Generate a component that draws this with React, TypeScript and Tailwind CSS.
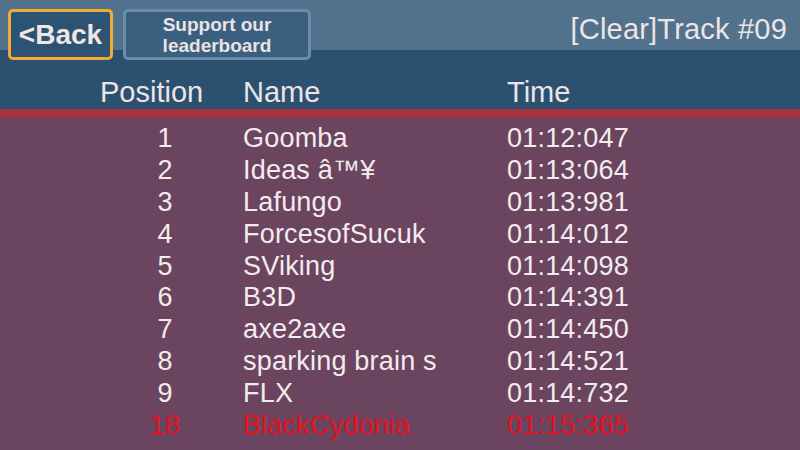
import React from "react";

type Entry = {
  pos: number;
  name: string;
  time: string;
  me?: boolean;
};

const entries: Entry[] = [
  { pos: 1, name: "Goomba", time: "01:12:047" },
  { pos: 2, name: "Ideas â™¥", time: "01:13:064" },
  { pos: 3, name: "Lafungo", time: "01:13:981" },
  { pos: 4, name: "ForcesofSucuk", time: "01:14:012" },
  { pos: 5, name: "SViking", time: "01:14:098" },
  { pos: 6, name: "B3D", time: "01:14:391" },
  { pos: 7, name: "axe2axe", time: "01:14:450" },
  { pos: 8, name: "sparking brain s", time: "01:14:521" },
  { pos: 9, name: "FLX", time: "01:14:732" },
  { pos: 18, name: "BlackCydonia", time: "01:15:365", me: true },
];

export default function App() {
  return (
    <div
      className="w-[800px] h-[450px] overflow-hidden flex flex-col bg-[#6b445f] text-[#ede5e5]"
      style={{ fontFamily: '"Liberation Sans", Arial, sans-serif' }}
    >
      <div className="relative z-10 h-[50px] shrink-0 bg-[#52718c] flex items-start pt-[9px] pl-[8px] pr-[13px]">
        <button className="w-[105px] h-[51px] shrink-0 border-[3px] border-[#f2a936] rounded-[5px] bg-[#2d5373] text-[28px] font-bold leading-none text-[#f1e6e6] flex items-center justify-center">
          &lt;Back
        </button>
        <button className="ml-[10px] w-[188px] h-[51px] shrink-0 border-[3px] border-[#6c8ca7] rounded-[5px] bg-[#3a6080] text-[19px] font-bold leading-[21px] text-[#ece2e2] flex flex-col items-center justify-center">
          <span>Support our</span>
          <span>leaderboard</span>
        </button>
        <div className="ml-auto mt-[3px] text-[29px] leading-[34px] tracking-[0.2px]">[Clear]Track #09</div>
      </div>
      <div className="h-[59px] shrink-0 bg-[#2b5070] flex items-end pb-0 text-[29px] leading-[34px]">
        <div className="ml-[100px] w-[143px]">Position</div>
        <div className="w-[264px]">Name</div>
        <div>Time</div>
      </div>
      <div className="h-[9px] shrink-0 bg-[#a3333f]" />
      <div className="flex flex-col pt-[5px]">
        {entries.map((e) => (
          <div
            key={e.pos}
            className={
              "flex h-[31.8px] items-center text-[27px] leading-none tracking-[0.2px] " +
              (e.me ? "text-[#e8101c]" : "text-[#f2ecec]")
            }
          >
            <div className="ml-[100px] w-[130px] text-center">{e.pos}</div>
            <div className="ml-[13px] w-[264px] whitespace-nowrap">{e.name}</div>
            <div>{e.time}</div>
          </div>
        ))}
      </div>
    </div>
  );
}
